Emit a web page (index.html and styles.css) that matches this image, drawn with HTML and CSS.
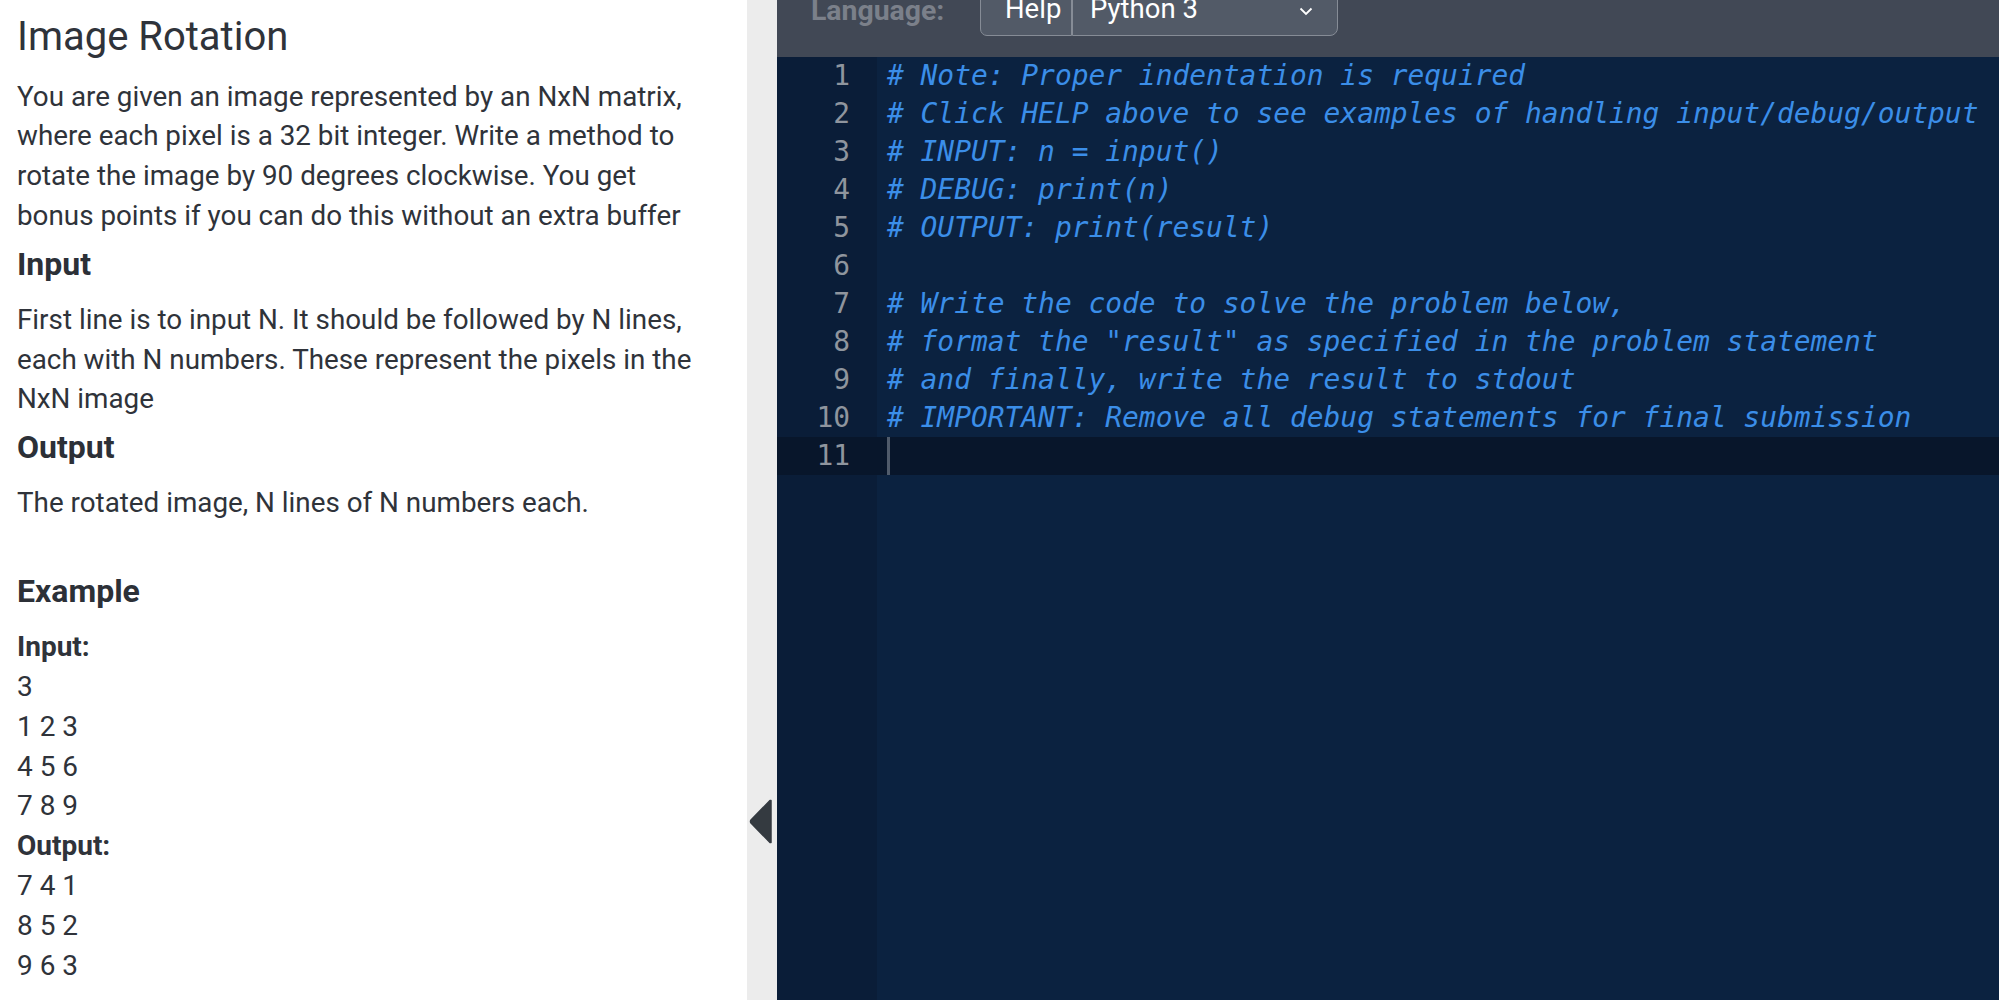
FILE: index.html
```html
<!DOCTYPE html>
<html>
<head>
<meta charset="utf-8">
<link rel="stylesheet" href="styles.css">
</head>
<body>
<div class="page">
  <section class="problem">
    <h1 class="title">Image Rotation</h1>
    <p class="para">You are given an image represented by an NxN matrix, where each pixel is a 32 bit integer. Write a method to rotate the image by 90 degrees clockwise. You get bonus points if you can do this without an extra buffer</p>
    <h3 class="heading">Input</h3>
    <p class="para">First line is to input N. It should be followed by N lines, each with N numbers. These represent the pixels in the NxN image</p>
    <h3 class="heading">Output</h3>
    <p class="para">The rotated image, N lines of N numbers each.<br>&nbsp;</p>
    <h3 class="heading heading-example">Example</h3>
    <div class="example">
      <div class="ex-label">Input:</div>
      <div>3</div>
      <div>1 2 3</div>
      <div>4 5 6</div>
      <div>7 8 9</div>
      <div class="ex-label">Output:</div>
      <div>7 4 1</div>
      <div>8 5 2</div>
      <div>9 6 3</div>
    </div>
  </section>
  <div class="divider">
    <svg class="collapse" width="24" height="45" viewBox="0 0 24 45"><path d="M22 1.5 L21 1.5 L2 21 Q1 22.5 2 24 L21 43.5 L22 43.5 Z" fill="#343a40" stroke="#343a40" stroke-width="1.5" stroke-linejoin="round"/></svg>
  </div>
  <section class="editor">
    <div class="toolbar">
      <span class="lang-label">Language:</span>
      <span class="btn-help">Help</span>
      <span class="select">Python 3
        <svg class="chev" width="14" height="9" viewBox="0 0 14 9"><path d="M1.5 1.5 L7 7 L12.5 1.5" fill="none" stroke="#ffffff" stroke-width="1.8"/></svg>
      </span>
    </div>
    <div class="code">
      <div class="gutter">
        <div class="ln">1</div><div class="ln">2</div><div class="ln">3</div><div class="ln">4</div><div class="ln">5</div><div class="ln">6</div><div class="ln">7</div><div class="ln">8</div><div class="ln">9</div><div class="ln">10</div><div class="ln active">11</div>
      </div>
      <div class="lines">
        <div class="cl"># Note: Proper indentation is required</div>
        <div class="cl"># Click HELP above to see examples of handling input/debug/output</div>
        <div class="cl"># INPUT: n = input()</div>
        <div class="cl"># DEBUG: print(n)</div>
        <div class="cl"># OUTPUT: print(result)</div>
        <div class="cl"></div>
        <div class="cl"># Write the code to solve the problem below,</div>
        <div class="cl"># format the "result" as specified in the problem statement</div>
        <div class="cl"># and finally, write the result to stdout</div>
        <div class="cl"># IMPORTANT: Remove all debug statements for final submission</div>
        <div class="cl active"><span class="cursor"></span></div>
      </div>
    </div>
  </section>
</div>
</body>
</html>
```
FILE: styles.css
```css
html, body {
  margin: 0;
  padding: 0;
  height: 1000px;
  overflow: hidden;
}
body {
  font-family: Roboto, "Liberation Sans", sans-serif;
  color: #2f333a;
  background: #ffffff;
}
.page {
  display: flex;
  height: 1000px;
}
.problem {
  width: 747px;
  box-sizing: border-box;
  padding: 0 35px 0 17px;
  flex-shrink: 0;
}
.title {
  font-size: 40px;
  font-weight: 400;
  line-height: 48px;
  margin: 12.5px 0 16px 0;
  color: #2f333a;
}
.para {
  font-size: 27.8px;
  line-height: 39.7px;
  margin: 0;
}
.heading {
  font-size: 32px;
  font-weight: 700;
  line-height: 38px;
  margin: 9.5px 0 17px 0;
  color: #2c3037;
}
.heading-example {
  margin-top: 9px;
  margin-bottom: 17px;
}
.example {
  font-size: 28px;
  line-height: 39.9px;
}
.ex-label {
  font-weight: 700;
}
.divider {
  width: 30px;
  flex-shrink: 0;
  background: #ececec;
  display: flex;
  flex-direction: column;
}
.collapse {
  margin-top: 799px;
  margin-left: 2px;
}
.editor {
  flex: 1;
  display: flex;
  flex-direction: column;
  background: #0b2240;
}
.toolbar {
  height: 57px;
  flex-shrink: 0;
  background: #414855;
  display: flex;
  align-items: flex-start;
  overflow: hidden;
  padding-left: 34px;
}
.lang-label {
  font-size: 28.4px;
  font-weight: 700;
  color: #7b808a;
  line-height: 40px;
  margin-top: -9px;
  width: 169px;
}
.btn-help, .select {
  font-size: 27.5px;
  line-height: 40px;
  color: #ffffff;
  background: #525a67;
  border: 1.5px solid #868c96;
  padding: 6px 0 6px 0;
  margin-top: -18px;
}
.btn-help {
  width: 92px;
  box-sizing: border-box;
  padding-left: 24px;
  border-radius: 0 0 0 7px;
}
.select {
  width: 266px;
  box-sizing: border-box;
  padding-left: 17px;
  border-radius: 0 0 8px 0;
  position: relative;
}
.chev {
  position: absolute;
  left: 226px;
  top: 24px;
}
.code {
  flex: 1;
  display: flex;
  font-family: "DejaVu Sans Mono", monospace;
  font-size: 27.9px;
  line-height: 38px;
}
.gutter {
  width: 100px;
  flex-shrink: 0;
  background: #0a1d38;
  color: #8f959e;
}
.ln {
  height: 38px;
  text-align: right;
  padding-right: 27px;
}
.lines {
  flex: 1;
  color: #3b8ee8;
  font-style: italic;
}
.cl {
  height: 38px;
  padding-left: 10px;
  white-space: pre;
}
.active {
  background: #08162b;
}
.cursor {
  display: inline-block;
  width: 2.5px;
  height: 38px;
  background: #505b6b;
  vertical-align: top;
}
```
